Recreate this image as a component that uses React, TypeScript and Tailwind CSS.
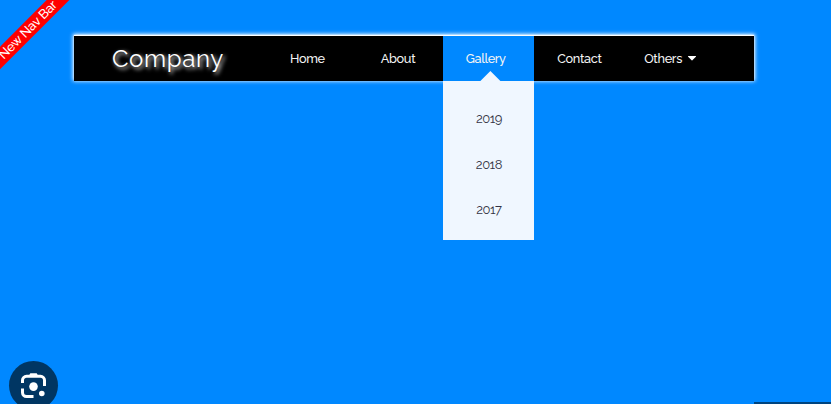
const font = "font-['Raleway','Lato',sans-serif]";

function NavItem({ label, className = "" }: { label: string; className?: string }) {
  return (
    <a className={`flex h-[45px] w-[90.7px] items-center justify-center text-[12.7px] font-medium tracking-[-0.35px] text-[#f4f4f4] ${className}`}>
      {label}
    </a>
  );
}

export default function App() {
  return (
    <div className={`relative h-[404px] w-[831px] overflow-hidden bg-[#0088ff] pt-9 ${font}`}>
      <nav className="ml-[74px] flex h-[45px] w-[680px] bg-black shadow-[0_-1px_4px_1px_#fff,0_-1px_1px_0_#fff]">
        <div className="flex w-[188px] items-center pl-[38px] text-[24px] tracking-[0.65px] text-white [text-shadow:2px_2px_4px_#fff]">
          Company
        </div>
        <NavItem label="Home" />
        <NavItem label="About" />
        <div className="relative w-[90.7px] bg-[#0088ff]">
          <NavItem label="Gallery" className="pr-[6px]" />
          <div className="absolute left-0 top-[45px] flex h-[159px] w-[91px] flex-col items-center bg-[#f0f7ff] pt-[15px] text-[13px] tracking-[-0.5px] text-[#333344]">
            {["2019", "2018", "2017"].map((y) => (
              <div key={y} className="flex h-[45.5px] items-center">{y}</div>
            ))}
          </div>
          <div className="absolute left-[36px] top-[35px] h-[11px] w-[22px] bg-[#f0f7ff] [clip-path:polygon(50%_0,100%_100%,0_100%)]" />
        </div>
        <NavItem label="Contact" />
        <a className="flex h-[45px] w-[90.7px] items-center justify-center gap-[6px] text-[12.7px] font-medium tracking-[-0.3px] text-[#f4f4f4]">
          Others
          <svg width="8" height="5" viewBox="0 0 8 5" fill="white">
            <path d="M.4 0h7.2c.4 0 .5.4.3.7L4.4 4.3q-.4.4-.8 0L.1.7C-.1.4 0 0 .4 0Z" />
          </svg>
        </a>
      </nav>
      <div className="absolute left-[-47px] top-[22px] flex h-[16px] w-[150px] -rotate-45 items-center justify-center bg-[#ff0000] text-[13px] font-medium tracking-[-0.2px] text-white">
        New Nav Bar
      </div>
      <div className="absolute left-[9px] top-[361px] size-[49px] rounded-full bg-[#003663]">
        <svg className="absolute left-[12px] top-[11px]" width="26" height="27" viewBox="0 0 26 27" fill="none" stroke="white" strokeWidth="3">
          <path d="M1.5 11V8.3a4 4 0 0 1 4-4h14a4 4 0 0 1 4 4V14M1.5 16.5v4a4 4 0 0 0 4 4h7" />
          <path d="M7.5 4.5 9.3 1.2h6.4L17.5 4.5Z" fill="white" stroke="none" />
          <circle cx="12.5" cy="14.6" r="4.3" fill="white" stroke="none" />
          <circle cx="20.8" cy="21.5" r="2.8" fill="white" stroke="none" />
        </svg>
      </div>
      <div className="absolute bottom-0 right-0 h-[2px] w-[77px] bg-[#00447f]" />
    </div>
  );
}
